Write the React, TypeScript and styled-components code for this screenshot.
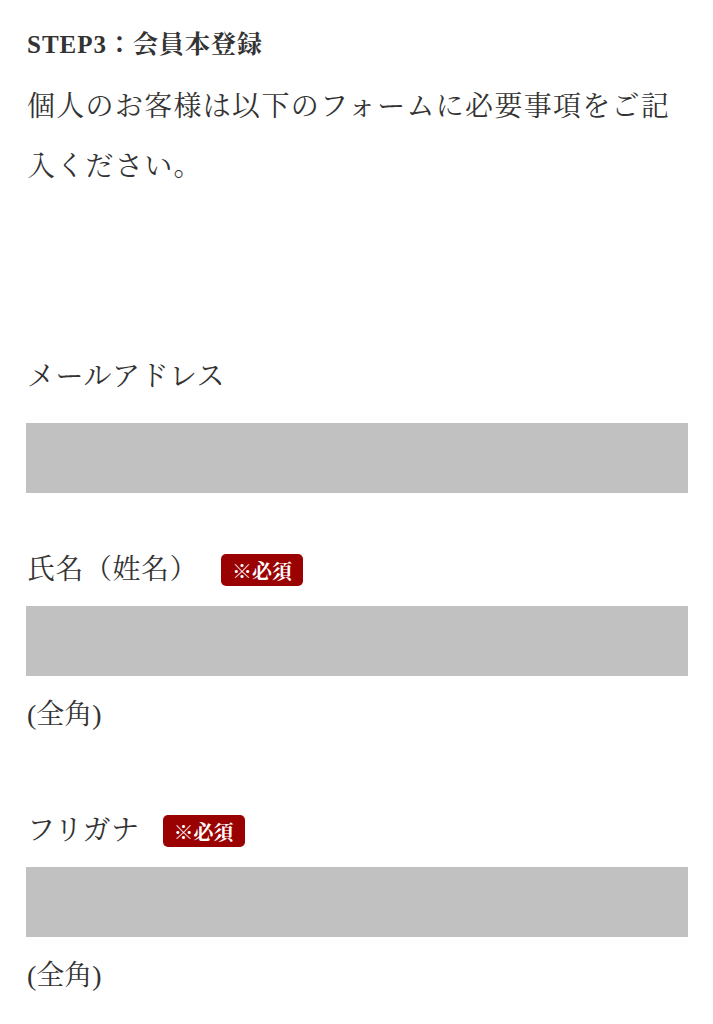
import React from 'react';
import styled, { createGlobalStyle } from 'styled-components';

const GlobalStyle = createGlobalStyle`
  body {
    margin: 0;
    background: #fff;
  }
`;

const fields = [
  { label: 'メールアドレス', required: false, note: '' },
  { label: '氏名（姓名）', required: true, note: '(全角)' },
  { label: 'フリガナ', required: true, note: '(全角)' },
];

function App() {
  return (
    <PageWrap>
      <GlobalStyle />
      <StepTitle>STEP3：会員本登録</StepTitle>
      <Lead>個人のお客様は以下のフォームに必要事項をご記入ください。</Lead>
      <Form>
        {fields.map((f) => (
          <Field key={f.label}>
            <LabelRow $loose={!f.required}>
              <Label>{f.label}</Label>
              {f.required && <Badge>※必須</Badge>}
            </LabelRow>
            <Input type="text" />
            {f.note && <Note>{f.note}</Note>}
          </Field>
        ))}
      </Form>
    </PageWrap>
  );
}

export default App;

const PageWrap = styled.div`
  padding: 28px 25px 0 27px;
  color: #333;
  font-family: 'Liberation Serif', 'Noto Serif CJK JP', 'Noto Sans CJK JP', serif;
`;

const StepTitle = styled.h3`
  margin: 0;
  font-size: 25px;
  line-height: 33px;
  font-weight: bold;
  letter-spacing: 1px;
`;

const Lead = styled.p`
  margin: 16px 0 0;
  font-size: 28px;
  line-height: 60px;
  letter-spacing: 1.3px;
`;

const Form = styled.div`
  display: flex;
  flex-direction: column;
  gap: 57px;
  margin-top: 160px;
`;

const Field = styled.div`
  display: flex;
  flex-direction: column;
`;

const LabelRow = styled.div<{ $loose: boolean }>`
  display: flex;
  align-items: center;
  height: 40px;
  margin-bottom: ${({ $loose }) => ($loose ? '26px' : '16px')};
`;

const Label = styled.span`
  font-size: 28px;
  line-height: 40px;
  letter-spacing: 0.5px;
`;

const Badge = styled.span`
  display: inline-flex;
  align-items: center;
  height: 32px;
  margin-left: 23px;
  padding: 0 11px;
  border-radius: 5px;
  background: #9a0202;
  color: #fff;
  font-size: 20px;
  font-weight: bold;
`;

const Input = styled.input`
  display: block;
  box-sizing: border-box;
  width: calc(100% + 1px);
  height: 70px;
  margin: 0 0 0 -1px;
  border: none;
  background: #c1c1c1;
  outline: none;
`;

const Note = styled.div`
  margin: 19px 0;
  font-size: 28px;
  line-height: 40px;
`;
